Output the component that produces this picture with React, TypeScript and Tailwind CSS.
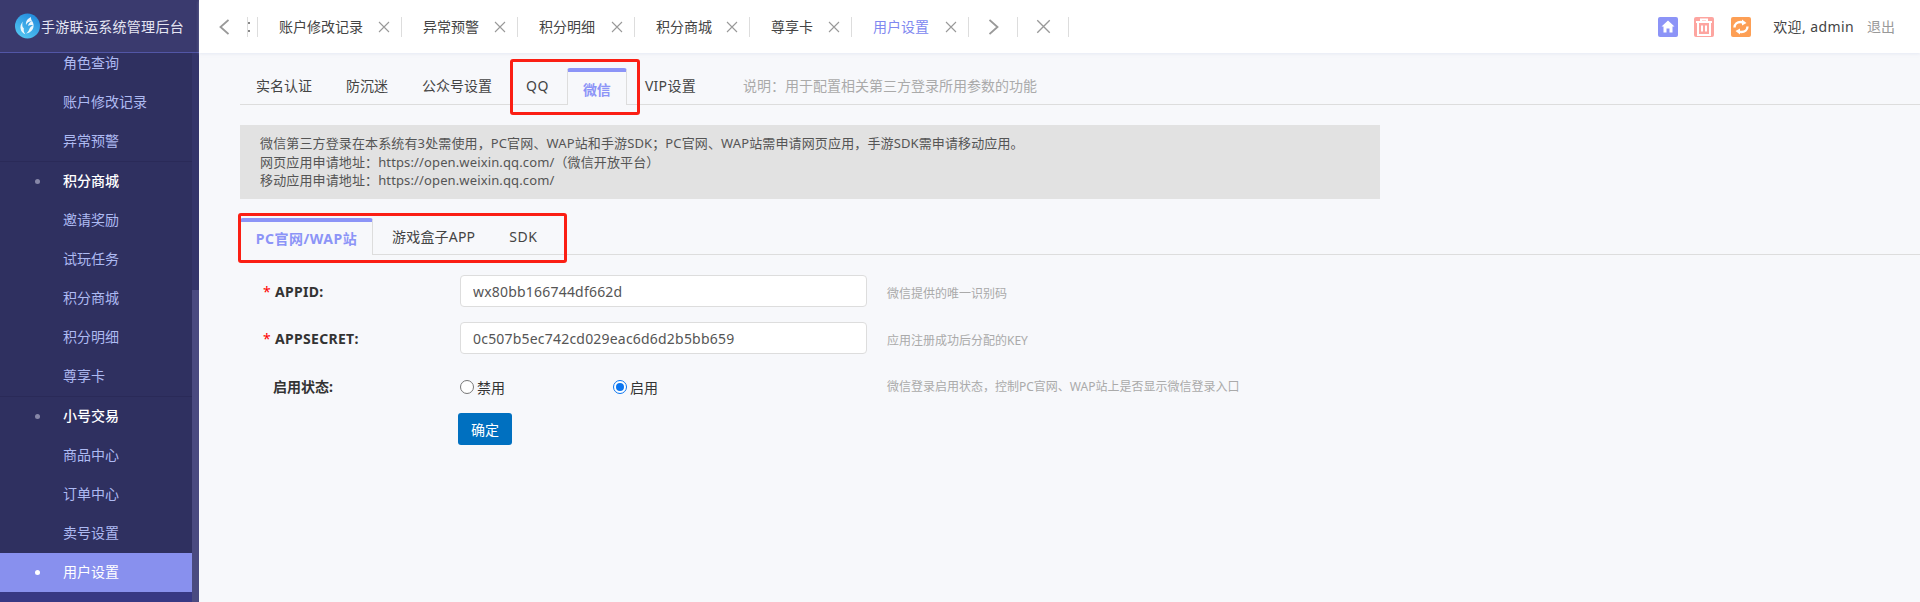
import React from "react";

const font = { fontFamily: '"Noto Sans", "Noto Sans CJK SC", sans-serif' };

const menu = [
	{ label: "角色查询" },
	{ label: "账户修改记录" },
	{ label: "异常预警" },
	{ label: "积分商城", head: true },
	{ label: "邀请奖励" },
	{ label: "试玩任务" },
	{ label: "积分商城" },
	{ label: "积分明细" },
	{ label: "尊享卡" },
	{ label: "小号交易", head: true },
	{ label: "商品中心" },
	{ label: "订单中心" },
	{ label: "卖号设置" },
	{ label: "用户设置", active: true },
];

const navTabs = [
	{ label: "账户修改记录", w: "w-[144px]" },
	{ label: "异常预警", w: "w-[116px]" },
	{ label: "积分明细", w: "w-[117px]" },
	{ label: "积分商城", w: "w-[115px]" },
	{ label: "尊享卡", w: "w-[102px]" },
	{ label: "用户设置", w: "w-[117px]", active: true },
];

const Logo = () => (
	<svg width="25" height="26" viewBox="0 0 25 26" className="shrink-0">
		<defs>
			<linearGradient id="logo-bg" x1="0.8" y1="0" x2="0.2" y2="1">
				<stop offset="0" stopColor="#2088dc" />
				<stop offset="1" stopColor="#55c8f2" />
			</linearGradient>
		</defs>
		<circle cx="12.5" cy="13" r="12.5" fill="url(#logo-bg)" />
		<path d="M16 4c-3.500 1.500-5.500 4.500-5 8 1-2.200 3-3.500 6-4-2.500 1.300-3.800 3-3.800 5 1.800-1.200 3.600-1.300 5-.5-1.800.5-3.200 1.700-3.800 3.500-.7 2-2 3.500-3.400 4.500 3-.3 6.300-2.300 7.300-5.800.7-2.500.1-4.700-.9-6.200-1-1.400-1.700-2.800-1.400-4.500z" fill="#fff" opacity="0.9" />
		<path d="M8 8.500c-2.300 2.300-3.300 5.500-2 8.800.9 2.100 2.800 3.500 4.300 3.900-1.400-1.900-1.900-3.800-1.400-5.800-.8-.5-1.400-1.400-1.600-2.800-.2-1.400.1-2.700.7-4.100z" fill="#fff" opacity="0.9" />
	</svg>
);

const X = ({ size = 12, color = "#999" }: { size?: number; color?: string }) => (
	<svg width={size} height={size} viewBox="0 0 12 12" fill="none" stroke={color} strokeWidth="1.1">
		<path d="M1 1l10 10M11 1L1 11" />
	</svg>
);

const Sidebar = () => (
	<aside className="w-[199px] h-full shrink-0 flex flex-col bg-[#2f3060]">
		<div className="h-[53px] shrink-0 flex items-center pl-[15px] gap-[1px] bg-[#3a3a6e] border-b border-[#5256a6] relative z-10">
			<Logo />
			<span className="text-[14px] tracking-[0.3px] text-[#e4e5f2] whitespace-nowrap">手游联运系统管理后台</span>
		</div>
		<div className="flex-1 flex min-h-0">
			<div className="w-[192px] overflow-hidden">
				<ul className="-mt-[9px]">
					{menu.map((item, i) => (
						<li
							key={i}
							className={
								item.active
									? "h-[39px] flex items-center relative text-[14px] text-white bg-[#8890ee]"
									: item.head
										? "h-[40px] flex items-center relative text-[14px] font-medium text-white border-t border-[#2a2a58]"
										: "h-[39px] flex items-center text-[14px] text-[#aebaf2]"
							}
						>
							{(item.head || item.active) && (
								<span
									className={
										item.active
											? "absolute left-[35px] w-[5px] h-[5px] rounded-full bg-white"
											: "absolute left-[35px] w-[5px] h-[5px] rounded-full bg-[#8787a8]"
									}
								/>
							)}
							<span className="pl-[63px] pb-[2px]">{item.label}</span>
						</li>
					))}
				</ul>
				<div className="h-[20px] bg-[#373884]" />
			</div>
			<div className="w-[7px] bg-[#34356a]">
				<div className="mt-[237px] h-[312px] bg-[#4a4a80]" />
			</div>
		</div>
	</aside>
);

const TopBar = () => (
	<header className="h-[53px] shrink-0 bg-white flex items-center shadow-[0_1px_3px_rgba(200,205,230,0.35)] relative z-10">
		<div className="w-[49px] h-[20px] flex items-center border-r border-[#ddd] pl-[20px]">
			<svg width="10" height="16" viewBox="0 0 10 16" fill="none" stroke="#999" strokeWidth="1.8">
				<path d="M9.500 1L1.500 8l8 7" />
			</svg>
		</div>
		<div className="w-[10px] h-[20px] border-r border-[#ddd] flex flex-col justify-center gap-[6px]">
			<span className="w-[2px] h-[2px] bg-[#888]" />
			<span className="w-[2px] h-[2px] bg-[#888]" />
		</div>
		{navTabs.map((t) => (
			<div key={t.label} className={`${t.w} h-[20px] border-r border-[#ddd] flex items-center justify-between pl-[21px] pr-[11px] text-[14px] whitespace-nowrap`}>
				<span className={t.active ? "text-[#8088f0]" : "text-[#444]"}>{t.label}</span>
				<X />
			</div>
		))}
		<div className="w-[49px] h-[20px] border-r border-[#ddd] flex items-center pl-[20px]">
			<svg width="10" height="16" viewBox="0 0 10 16" fill="none" stroke="#999" strokeWidth="1.8">
				<path d="M.5 1l8 7-8 7" />
			</svg>
		</div>
		<div className="w-[51px] h-[20px] border-r border-[#ddd] flex items-center pl-[18px]">
			<X size={15} color="#999" />
		</div>
		<div className="ml-auto flex items-center text-[14px] pr-[25px]">
			<span className="w-[20px] h-[20px] rounded-[2px] bg-[#8c94f7] flex items-center justify-center">
				<svg width="14" height="13" viewBox="0 0 14 13" fill="#fff">
					<path d="M7 0.500L0.500 6.500H2.500V12.500H5.500V8.500H8.500V12.500H11.500V6.500H13.500z" />
				</svg>
			</span>
			<span className="ml-[16px] w-[20px] h-[20px] rounded-[2px] bg-[#fda5a0] flex items-center justify-center">
				<svg width="18" height="18" viewBox="0 0 18 18" fill="none" stroke="#fff" strokeWidth="2">
					<path d="M1 4h16M6 4V1.500h6V4M3 4v13h12V4M7 7.500v6M11 7.500v6" />
				</svg>
			</span>
			<span className="ml-[17px] w-[20px] h-[20px] rounded-[2px] bg-[#fd9f55] flex items-center justify-center">
				<svg width="16" height="16" viewBox="0 0 16 16" fill="none" stroke="#fff" strokeWidth="2.4">
					<path d="M1.500 8.500C1.500 5 4.500 3 7.500 3c1.200 0 2.200.3 3 .8M14.500 7.500C14.500 11 11.500 13 8.500 13c-1.200 0-2.200-.3-3-.8" />
					<path d="M9 .5l4.500 3.500L9 6.500zM7 9.500l-4.500 2.500L7 15.500z" fill="#fff" stroke="none" />
				</svg>
			</span>
			<span className="ml-[22px] text-[#444] tracking-[0.4px]">欢迎, admin</span>
			<span className="ml-[13px] text-[#999]">退出</span>
		</div>
	</header>
);

const outerTabs = ["实名认证", "防沉迷", "公众号设置"];

const Content = () => (
	<main className="flex-1 overflow-hidden bg-[#f7f8fb] pl-[41px] pt-[16px] text-[14px]">
		{/* 第一排 tab */}
		<div className="relative h-[36px] flex items-end border-b border-[#ddd] pl-[1px]">
			<div className="flex items-center h-[35px] -mb-[1px]">
				{outerTabs.map((t) => (
					<span key={t} className="ml-[15px] mr-[19px] text-[#444] -mt-[5px]">{t}</span>
				))}
				<span className="ml-[15px] mr-[18px] text-[#444] -mt-[5px] tracking-[0.5px]">QQ</span>
			</div>
			<div className="-mb-[1px] ml-0 w-[60px] h-[37px] pt-[2px] bg-[#f7f8fb] border-x border-[#ddd] border-t-[4px] border-t-[#8c94f7] rounded-t-[3px] flex items-center justify-center font-bold text-[#8c94f7]">
				微信
			</div>
			<div className="flex items-center h-[35px] -mb-[1px]">
				<span className="ml-[18px] text-[#444] -mt-[5px] tracking-[0.3px]">VIP设置</span>
				<span className="ml-[47px] text-[#aaa] -mt-[5px]">说明：用于配置相关第三方登录所用参数的功能</span>
			</div>
			<div className="absolute left-[270px] -top-[10px] w-[130px] h-[56px] border-[3px] border-[#fb1f14] rounded-[3px]" />
		</div>

		<div className="mt-[20px] w-[1140px] h-[74px] bg-[#e2e2e2] px-[20px] pt-[9px] text-[13px] leading-[18.5px] tracking-[0.13px] text-[#555]">
			<p>微信第三方登录在本系统有3处需使用，PC官网、WAP站和手游SDK；PC官网、WAP站需申请网页应用，手游SDK需申请移动应用。</p>
			<p>网页应用申请地址：https://open.weixin.qq.com/（微信开放平台）</p>
			<p>移动应用申请地址：https://open.weixin.qq.com/</p>
		</div>

		{/* 第二排 tab */}
		<div className="relative mt-[20px] h-[36px] flex items-end border-b border-[#ddd]">
			<div className="-mb-[1px] w-[133px] h-[37px] bg-[#f7f8fb] border-x border-[#ddd] border-t-[4px] border-t-[#8c94f7] rounded-t-[3px] flex items-center justify-center font-bold text-[#8c94f7] tracking-[0.5px]">
				PC官网/WAP站
			</div>
			<div className="flex items-center h-[35px] -mb-[1px] text-[#444] tracking-[0.2px]">
				<span className="ml-[19px] -mt-[3px]">游戏盒子APP</span>
				<span className="ml-[34px] -mt-[3px] tracking-[0.5px]">SDK</span>
			</div>
			<div className="absolute -left-[2px] -top-[6px] w-[329px] h-[50px] border-[3px] border-[#fb1f14] rounded-[3px]" />
		</div>

		<form className="pt-[20px]">
			<div className="flex items-center h-[32px]">
				<label className="w-[220px] pl-[23px] font-bold text-[#333] whitespace-nowrap tracking-[0.3px]"><span className="text-[#f00] font-normal mr-[4px]">*</span>APPID:</label>
				<input readOnly value="wx80bb166744df662d" className="w-[407px] h-[32px] bg-white border border-[#ddd] rounded-[4px] px-[12px] text-[#555] tracking-[0.2px] outline-none" />
				<span className="ml-[20px] mt-[6px] text-[12px] text-[#aaa]">微信提供的唯一识别码</span>
			</div>
			<div className="flex items-center h-[32px] mt-[15px]">
				<label className="w-[220px] pl-[23px] font-bold text-[#333] whitespace-nowrap tracking-[0.3px]"><span className="text-[#f00] font-normal mr-[4px]">*</span>APPSECRET:</label>
				<input readOnly value="0c507b5ec742cd029eac6d6d2b5bb659" className="w-[407px] h-[32px] bg-white border border-[#ddd] rounded-[4px] px-[12px] text-[#555] tracking-[0.2px] outline-none" />
				<span className="ml-[20px] mt-[5px] text-[12px] text-[#aaa]">应用注册成功后分配的KEY</span>
			</div>
			<div className="flex items-center h-[32px] mt-[17px]">
				<label className="w-[220px] pl-[33px] font-bold text-[#333] -mt-[1px]">启用状态:</label>
				<div className="w-[153px] flex items-center gap-[3px] text-[#333]">
					<span className="w-[14px] h-[14px] rounded-full bg-white border border-[#777]" />
					禁用
				</div>
				<div className="w-[254px] flex items-center gap-[3px] text-[#333]">
					<span className="w-[14px] h-[14px] rounded-full bg-white border border-[#0a75f0] flex items-center justify-center">
						<span className="w-[8px] h-[8px] rounded-full bg-[#0a75f0]" />
					</span>
					启用
				</div>
				<span className="ml-[20px] text-[12px] text-[#aaa]">微信登录启用状态，控制PC官网、WAP站上是否显示微信登录入口</span>
			</div>
			<div className="mt-[10px] pl-[218px]">
				<button type="button" className="w-[54px] h-[32px] bg-[#0070c0] text-white text-[14px] rounded-[3px]">确定</button>
			</div>
		</form>
	</main>
);

export default function App() {
	return (
		<div className="w-[1920px] h-[602px] flex overflow-hidden" style={font}>
			<Sidebar />
			<div className="flex-1 flex flex-col min-w-0">
				<TopBar />
				<Content />
			</div>
		</div>
	);
}
